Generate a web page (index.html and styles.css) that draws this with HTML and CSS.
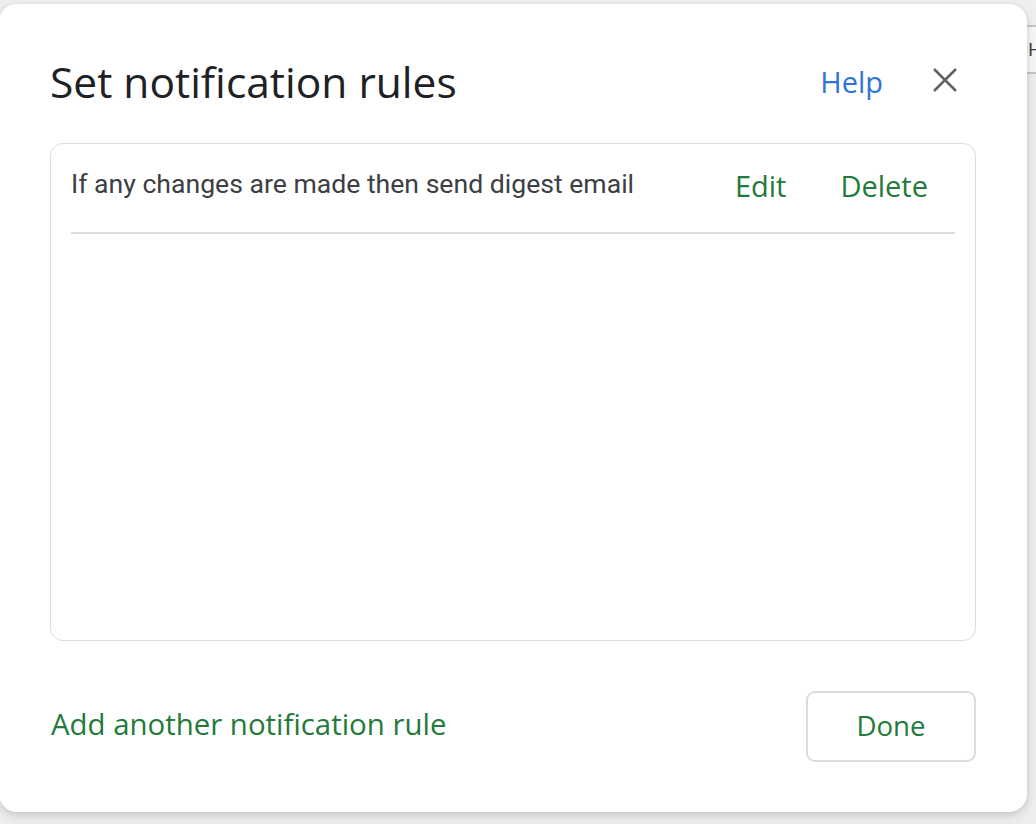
FILE: index.html
```html
<!DOCTYPE html>
<html lang="en">

<head>
    <meta charset="UTF-8">
    <meta name="viewport" content="width=device-width, initial-scale=1.0">
    <title>Notification rules</title>
    <link rel="stylesheet" href="styles.css">
</head>

<body>
    <!-- Sheet behind the modal -->
    <div class="backdrop">
        <div class="toolbar"></div>
        <div class="formula-bar">
            <span class="cell-ref">H</span>
        </div>
    </div>

    <div class="dialog" role="dialog" aria-labelledby="dialogTitle">
        <div class="dialog-header">
            <h1 id="dialogTitle">Set notification rules</h1>
            <a href="#" class="help-link">Help</a>
            <button class="close-btn" aria-label="Close">
                <svg width="24" height="24" viewBox="0 0 24 24">
                    <path d="M1 1 L23 23 M23 1 L1 23" stroke="#5f6368" stroke-width="2.6" fill="none" />
                </svg>
            </button>
        </div>

        <div class="rules-box">
            <div class="rule-row">
                <span class="rule-text">If any changes are made then send digest email</span>
                <div class="rule-actions">
                    <button class="text-btn">Edit</button>
                    <button class="text-btn">Delete</button>
                </div>
            </div>
        </div>

        <div class="dialog-footer">
            <a href="#" class="add-rule">Add another notification rule</a>
            <button class="btn-done">Done</button>
        </div>
    </div>
</body>

</html>
```

FILE: styles.css
```css
/* Reset */
* {
    margin: 0;
    padding: 0;
    box-sizing: border-box;
}

body {
    font-family: 'Open Sans', sans-serif;
    background-color: #efefef;
    width: 1036px;
    height: 824px;
    overflow: hidden;
}

/* Sheet behind the modal */
.backdrop {
    padding-top: 25px;
}

.formula-bar {
    height: 49px;
    border-top: 2px solid #c6c6c6;
    border-bottom: 2px solid #c6c6c6;
    background: #f7f7f7;
    display: flex;
    align-items: center;
    justify-content: flex-end;
}

.cell-ref {
    font-family: 'Roboto', sans-serif;
    font-size: 18px;
    color: #3c4043;
    margin-right: -5px;
}

/* Dialog */
.dialog {
    position: absolute;
    top: 4px;
    left: -1px;
    width: 1028px;
    height: 808px;
    background: #ffffff;
    border-radius: 18px;
    box-shadow: 0 2px 6px rgba(0, 0, 0, 0.12), 0 6px 16px rgba(0, 0, 0, 0.08);
    padding: 0 51px 0 51px;
    display: flex;
    flex-direction: column;
}

.dialog-header {
    display: flex;
    align-items: center;
    height: 139px;
    padding-top: 18px;
    padding-bottom: 2px;
}

.dialog-header h1 {
    flex: 1;
    font-weight: 400;
    font-size: 42.5px;
    color: #202124;
    letter-spacing: 0;
}

.help-link {
    font-size: 29px;
    font-weight: 500;
    color: #2f74d8;
    text-decoration: none;
    margin-right: 50px;
}

.close-btn {
    background: none;
    border: none;
    width: 24px;
    height: 24px;
    margin-right: 19px;
    margin-top: -4px;
    cursor: pointer;
}

/* Rules list */
.rules-box {
    height: 498px;
    border: 1px solid #dadce0;
    border-radius: 13px;
    padding: 0 20px;
}

.rule-row {
    display: flex;
    align-items: flex-start;
    justify-content: space-between;
    height: 90px;
    padding-top: 24px;
    border-bottom: 2px solid #dadce0;
}

.rule-text {
    font-family: 'Roboto', sans-serif;
    font-size: 26.6px;
    color: #3c4043;
}

.rule-actions {
    display: flex;
    gap: 54px;
    margin-right: 27px;
    margin-top: -2px;
}

.text-btn {
    background: none;
    border: none;
    font-family: 'Open Sans', sans-serif;
    font-size: 29px;
    font-weight: 500;
    color: #237a3a;
    cursor: pointer;
}

/* Footer */
.dialog-footer {
    display: flex;
    align-items: center;
    justify-content: space-between;
    margin-top: 50px;
}

.add-rule {
    font-size: 29.4px;
    font-weight: 500;
    color: #237a3a;
    text-decoration: none;
    margin-left: 1px;
    margin-top: -5px;
}

.btn-done {
    width: 170px;
    height: 71px;
    background: #ffffff;
    border: 2px solid #dadce0;
    border-radius: 9px;
    font-family: 'Open Sans', sans-serif;
    font-size: 27.6px;
    font-weight: 500;
    color: #237a3a;
    cursor: pointer;
    padding-bottom: 3px;
}
```
